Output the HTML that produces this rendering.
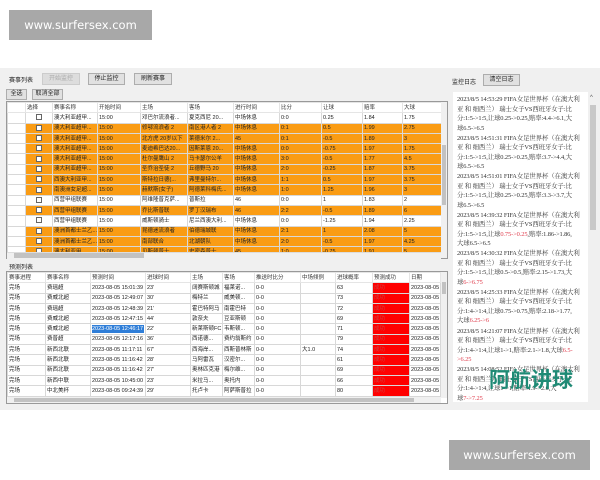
<!DOCTYPE html>
<html><head><meta charset="utf-8"><style>
*{margin:0;padding:0;box-sizing:border-box}
body{width:600px;height:480px;background:#fff;position:relative;overflow:hidden;font-family:"Liberation Sans","Noto Sans CJK SC",sans-serif;font-size:6px;color:#222}
.a{position:absolute}
.wm{background:#a8a8a8;color:#fff;font-family:"DejaVu Sans",sans-serif;text-align:center}
.app{left:0;top:68px;width:600px;height:342px;background:#f0f0f0}
.btn{position:absolute;background:#e1e1e1;border:1px solid #adadad;font-size:6px;text-align:center;line-height:11px}
table{border-collapse:collapse;table-layout:fixed;position:absolute}
td{border:1px solid #d8d8d8;height:10.3px;padding:0 1px;white-space:nowrap;overflow:hidden;font-size:5.5px;line-height:8px}
tr.h td{background:#fff;border-color:#e5e5e5;color:#333}
tr.o td{background:#fa9c14}
tr.o td.rh,tr.w td.rh{background:#fff}
tr.w td{background:#fff}
.cb{display:inline-block;width:6px;height:6px;border:1px solid #666;background:#fff;vertical-align:middle}
.red{background:#f00!important;color:#c44}
.sel{background:#2f7ed8!important;color:#fff}
.box{background:#fff;border:1px solid #999}
.log{left:453px;top:92px;width:135px;height:310px;background:#fff;font-family:"Liberation Serif","Noto Serif CJK SC",serif;font-size:6.4px;line-height:9.5px;color:#333;padding:3px 2px 0 4px;overflow:hidden;white-space:nowrap;letter-spacing:-0.1px}
.log p{height:38.6px;overflow:hidden}
.r{color:#e04050}
</style></head><body>
<div class="a wm" style="left:9px;top:10px;width:143px;height:30px;font-size:11.5px;line-height:30px">www.surfersex.com</div>
<div class="a app"></div>
<div class="a" style="left:9px;top:75px;font-size:6px">赛事列表</div>
<div class="btn" style="left:42px;top:73px;width:38px;height:12px;color:#aaa;background:#ddd;border-color:#ccc">开始监控</div>
<div class="btn" style="left:88px;top:73px;width:37px;height:12px">停止监控</div>
<div class="btn" style="left:134px;top:73px;width:38px;height:12px">刷新赛事</div>
<div class="btn" style="left:6px;top:89px;width:21px;height:11px;line-height:9px">全选</div>
<div class="btn" style="left:32px;top:89px;width:31px;height:11px;line-height:9px">取消全部</div>
<div class="a box" style="left:6px;top:101px;width:442px;height:158px"></div>
<table style="left:7px;top:102px;width:434px">
<colgroup><col style="width:18px"><col style="width:27px"><col style="width:45px"><col style="width:43px"><col style="width:47px"><col style="width:46px"><col style="width:46px"><col style="width:42px"><col style="width:41px"><col style="width:40px"><col style="width:39px"></colgroup>
<tr class="h"><td></td><td>选择</td><td>赛事名称</td><td>开始时间</td><td>主场</td><td>客场</td><td>进行时间</td><td>比分</td><td>让球</td><td>赔率</td><td>大球</td></tr>
<tr class="w"><td class="rh"></td><td style="text-align:center"><span class="cb"></span></td><td>澳大利亚超甲...</td><td>15:00</td><td>邓巴尔流浪者...</td><td>夏克西尼 20...</td><td>中场休息</td><td>0:0</td><td>0.25</td><td>1.84</td><td>1.75</td></tr>
<tr class="o"><td class="rh"></td><td style="text-align:center"><span class="cb"></span></td><td>澳大利亚超甲...</td><td>15:00</td><td>修鄂流浪者 2</td><td>南区港人者 2</td><td>中场休息</td><td>0:1</td><td>0.5</td><td>1.99</td><td>2.75</td></tr>
<tr class="o"><td class="rh"></td><td style="text-align:center"><span class="cb"></span></td><td>澳大利亚超甲...</td><td>15:00</td><td>北方虎 20岁以下</td><td>莱德米尔 2...</td><td>45</td><td>0:1</td><td>-0.5</td><td>1.89</td><td>3</td></tr>
<tr class="o"><td class="rh"></td><td style="text-align:center"><span class="cb"></span></td><td>澳大利亚超甲...</td><td>15:00</td><td>麦迪希巴达20...</td><td>因斯莱恩 20...</td><td>中场休息</td><td>0:0</td><td>-0.75</td><td>1.97</td><td>1.75</td></tr>
<tr class="o"><td class="rh"></td><td style="text-align:center"><span class="cb"></span></td><td>澳大利亚超甲...</td><td>15:00</td><td>杜尔曼鹰山 2</td><td>马卡瑟尔公羊</td><td>中场休息</td><td>3:0</td><td>-0.5</td><td>1.77</td><td>4.5</td></tr>
<tr class="o"><td class="rh"></td><td style="text-align:center"><span class="cb"></span></td><td>澳大利亚超甲...</td><td>15:00</td><td>圣乔治圣徒 2</td><td>丘德野马 20</td><td>中场休息</td><td>2:0</td><td>-0.25</td><td>1.87</td><td>3.75</td></tr>
<tr class="o"><td class="rh"></td><td style="text-align:center"><span class="cb"></span></td><td>西澳大利亚甲...</td><td>15:00</td><td>斯特拉日德(...</td><td>弗里曼特尔...</td><td>中场休息</td><td>1:1</td><td>0.5</td><td>1.97</td><td>3.75</td></tr>
<tr class="o"><td class="rh"></td><td style="text-align:center"><span class="cb"></span></td><td>南澳洲女足超...</td><td>15:00</td><td>赫默斯(女子)</td><td>阿德莱科梅氏...</td><td>中场休息</td><td>1:0</td><td>1.25</td><td>1.96</td><td>3</td></tr>
<tr class="w"><td class="rh"></td><td style="text-align:center"><span class="cb"></span></td><td>西营甲组联赛</td><td>15:00</td><td>阿维隆普克萨...</td><td>普斯拉</td><td>46</td><td>0:0</td><td>1</td><td>1.83</td><td>2</td></tr>
<tr class="o"><td class="rh"></td><td style="text-align:center"><span class="cb"></span></td><td>西营甲组联赛</td><td>15:00</td><td>乔比斯普联</td><td>罗丁汉瑞布</td><td>46</td><td>2:2</td><td>-0.5</td><td>1.89</td><td>6</td></tr>
<tr class="w"><td class="rh"></td><td style="text-align:center"><span class="cb"></span></td><td>西营甲组联赛</td><td>15:00</td><td>威斯顿骑士</td><td>尼兰西澳大利...</td><td>中场休息</td><td>0:0</td><td>-1.25</td><td>1.94</td><td>2.25</td></tr>
<tr class="o"><td class="rh"></td><td style="text-align:center"><span class="cb"></span></td><td>澳洲首都士兰乙...</td><td>15:00</td><td>昆德迷流浪者</td><td>伯德瑞城联</td><td>中场休息</td><td>2:1</td><td>1</td><td>2.08</td><td>5</td></tr>
<tr class="o"><td class="rh"></td><td style="text-align:center"><span class="cb"></span></td><td>澳洲首都士兰乙...</td><td>15:00</td><td>南部联合</td><td>北湖朝队</td><td>中场休息</td><td>2:0</td><td>-0.5</td><td>1.97</td><td>4.25</td></tr>
<tr class="o"><td class="rh"></td><td style="text-align:center"><span class="cb"></span></td><td>澳大利亚甲...</td><td>15:00</td><td>贝斯顿普士</td><td>史密森普士</td><td>45</td><td>1:0</td><td>-0.75</td><td>1.91</td><td>5</td></tr>
</table>
<div class="a" style="left:441px;top:102px;width:6px;height:156px;background:#f0f0f0"></div>
<div class="a" style="left:442px;top:145px;width:4px;height:60px;background:#c2c2c2"></div>
<div class="a" style="left:7px;top:252px;width:434px;height:7px;background:#f0f0f0;border-top:1px solid #ddd"></div>
<div class="a" style="left:14px;top:253px;width:130px;height:5px;background:#c2c2c2"></div>
<div class="a" style="left:9px;top:262px;font-size:6px">预测列表</div>
<div class="a box" style="left:6px;top:271px;width:442px;height:133px"></div>
<table style="left:7px;top:272px;width:433px">
<colgroup><col style="width:38px"><col style="width:45px"><col style="width:55px"><col style="width:45px"><col style="width:32px"><col style="width:32px"><col style="width:46px"><col style="width:35px"><col style="width:37px"><col style="width:37px"><col style="width:31px"></colgroup>
<tr class="h"><td>赛事进程</td><td>赛事名称</td><td>预测时间</td><td>进球时间</td><td>主场</td><td>客场</td><td>推送时比分</td><td>中场倾例</td><td>进球概率</td><td>预测成功</td><td>日期</td></tr>
<tr class="w"><td>完场</td><td>费瑶超</td><td>2023-08-05 15:01:39</td><td>23'</td><td>阔赛斯顿城</td><td>福莱诺...</td><td>0-0</td><td></td><td>63</td><td class="red">成功</td><td>2023-08-05</td></tr>
<tr class="w"><td>完场</td><td>费威北超</td><td>2023-08-05 12:49:07</td><td>30'</td><td>梅特兰</td><td>威美顿...</td><td>0-0</td><td></td><td>73</td><td class="red">成功</td><td>2023-08-05</td></tr>
<tr class="w"><td>完场</td><td>费瑶超</td><td>2023-08-05 12:48:39</td><td>21'</td><td>霍巴特阿马</td><td>南霍巴特</td><td>0-0</td><td></td><td>72</td><td class="red">成功</td><td>2023-08-05</td></tr>
<tr class="w"><td>完场</td><td>费威北超</td><td>2023-08-05 12:47:15</td><td>44'</td><td>敦奈夫</td><td>豆亚斯顿</td><td>0-0</td><td></td><td>69</td><td class="red">成功</td><td>2023-08-05</td></tr>
<tr class="w"><td>完场</td><td>费威北超</td><td><span class="sel" style="display:block">2023-08-05 12:46:17</span></td><td>22'</td><td>新莱斯顿FC</td><td>韦斯顿...</td><td>0-0</td><td></td><td>71</td><td class="red">成功</td><td>2023-08-05</td></tr>
<tr class="w"><td>完场</td><td>费普超</td><td>2023-08-05 12:17:16</td><td>36'</td><td>西诺德...</td><td>费约翁斯约</td><td>0-0</td><td></td><td>79</td><td class="red">成功</td><td>2023-08-05</td></tr>
<tr class="w"><td>完场</td><td>新西北联</td><td>2023-08-05 11:17:11</td><td>67'</td><td>西海岸...</td><td>西斯普林斯</td><td>0-0</td><td>大1.0</td><td>74</td><td class="red">成功</td><td>2023-08-05</td></tr>
<tr class="w"><td>完场</td><td>新西北联</td><td>2023-08-05 11:16:42</td><td>28'</td><td>马阿雷瓦</td><td>汉密尔...</td><td>0-0</td><td></td><td>61</td><td class="red">成功</td><td>2023-08-05</td></tr>
<tr class="w"><td>完场</td><td>新西北联</td><td>2023-08-05 11:16:42</td><td>27'</td><td>奥林匹克港</td><td>梅尔维...</td><td>0-0</td><td></td><td>69</td><td class="red">成功</td><td>2023-08-05</td></tr>
<tr class="w"><td>完场</td><td>新西中联</td><td>2023-08-05 10:45:00</td><td>23'</td><td>米拉马...</td><td>奥托内</td><td>0-0</td><td></td><td>66</td><td class="red">成功</td><td>2023-08-05</td></tr>
<tr class="w"><td>完场</td><td>中北美杯</td><td>2023-08-05 09:24:39</td><td>29'</td><td>托卢卡</td><td>阿萨斯普拉</td><td>0-0</td><td></td><td>80</td><td class="red">成功</td><td>2023-08-05</td></tr>
</table>
<div class="a" style="left:441px;top:272px;width:6px;height:126px;background:#f0f0f0"></div>
<div class="a" style="left:442px;top:282px;width:4px;height:12px;background:#c2c2c2"></div>
<div class="a" style="left:7px;top:397px;width:434px;height:6px;background:#f0f0f0"></div>
<div class="a" style="left:14px;top:398px;width:400px;height:4px;background:#c2c2c2"></div>
<div class="a" style="left:452px;top:77px;font-size:6px">监控日志</div>
<div class="btn" style="left:483px;top:74px;width:37px;height:12px">清空日志</div>
<div class="a log">
<p>2023/8/5 14:53:29 FIFA女足世界杯（在澳大利<br>亚 和 细西兰） 瑞士女子VS西班牙女子:比<br>分:1:5-&gt;1:5,让球0.25-&gt;0.25,赔率:4.4-&gt;6.1,大<br>球6.5-&gt;6.5</p>
<p>2023/8/5 14:51:31 FIFA女足世界杯（在澳大利<br>亚 和 细西兰） 瑞士女子VS西班牙女子:比<br>分:1:5-&gt;1:5,让球0.25-&gt;0.25,赔率:3.7-&gt;4.4,大<br>球6.5-&gt;6.5</p>
<p>2023/8/5 14:51:01 FIFA女足世界杯（在澳大利<br>亚 和 细西兰） 瑞士女子VS西班牙女子:比<br>分:1:5-&gt;1:5,让球0.25-&gt;0.25,赔率:3.3-&gt;3.7,大<br>球6.5-&gt;6.5</p>
<p>2023/8/5 14:39:32 FIFA女足世界杯（在澳大利<br>亚 和 细西兰） 瑞士女子VS西班牙女子:比<br>分:1:5-&gt;1:5,让球<span class="r">0.75-&gt;0.25</span>,赔率:1.86-&gt;1.86,<br>大球6.5-&gt;6.5</p>
<p>2023/8/5 14:30:32 FIFA女足世界杯（在澳大利<br>亚 和 细西兰） 瑞士女子VS西班牙女子:比<br>分:1:5-&gt;1:5,让球0.5-&gt;0.5,赔率:2.15-&gt;1.73,大<br>球<span class="r">6-&gt;6.75</span></p>
<p>2023/8/5 14:25:33 FIFA女足世界杯（在澳大利<br>亚 和 细西兰） 瑞士女子VS西班牙女子:比<br>分:1:4-&gt;1:4,让球0.75-&gt;0.75,赔率:2.18-&gt;1.77,<br>大球<span class="r">6.25-&gt;6</span></p>
<p>2023/8/5 14:21:07 FIFA女足世界杯（在澳大利<br>亚 和 细西兰） 瑞士女子VS西班牙女子:比<br>分:1:4-&gt;1:4,让球1-&gt;1,赔率:2.1-&gt;1.8,大球<span class="r">6.5-</span><br><span class="r">&gt;6.25</span></p>
<p>2023/8/5 14:08:52 FIFA女足世界杯（在澳大利<br>亚 和 细西兰） 瑞士女子VS西班牙女子:比<br>分:1:4-&gt;1:4,让球1-&gt;1,赔率:1.9-&gt;2.0,大<br>球<span class="r">7-&gt;7.25</span></p>
</div>
<div class="a" style="left:589px;top:92px;width:8px;height:310px;background:#f0f0f0"></div>
<div class="a" style="left:590px;top:105px;width:6px;height:125px;background:#c8c8c8"></div>
<div class="a" style="left:590px;top:95px;font-size:6px;color:#555">^</div>
<div class="a" style="left:489px;top:366px;font-size:21px;font-weight:bold;color:#1f8a75;font-family:'Noto Sans CJK SC',sans-serif;line-height:26px">阿航讲球</div>
<div class="a wm" style="left:449px;top:440px;width:141px;height:30px;font-size:11.5px;line-height:30px">www.surfersex.com</div>
</body></html>
